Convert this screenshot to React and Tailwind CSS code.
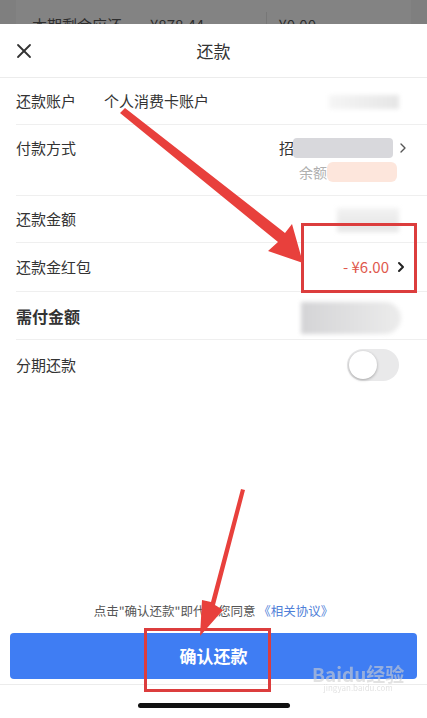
import { X, ChevronRight } from 'lucide-react'

const font = { fontFamily: '"Noto Sans CJK SC", "Noto Sans", sans-serif' }

function Row({ label, bold, children, className = '' }) {
  return (
    <div className={`ml-4 border-b border-[#efefef] flex justify-between pr-[18px] ${className}`}>
      <span className={`text-[15px] text-[#333] ${bold ? 'font-bold text-[16px]' : ''}`}>{label}</span>
      {children}
    </div>
  )
}

function Blur({ className }) {
  return <div className={`absolute blur-[2px] ${className}`} />
}

function App() {
  return (
    <div className="relative w-[427px] h-[718px] overflow-hidden bg-[#7f7f7f] flex flex-col" style={font}>
      {/* Dimmed sheet behind */}
      <div className="h-6 shrink-0 mx-4 bg-[#838383] flex items-end overflow-hidden">
        <div className="flex items-center w-full h-3 text-[15px] text-[#2e2e2e] leading-none translate-y-[6px]">
          <span className="ml-4">本期剩余应还</span>
          <span className="ml-7">¥878.44</span>
          <span className="ml-auto mr-3 w-px h-6 bg-[#777]" />
          <span className="mr-[95px]">¥0.00</span>
        </div>
      </div>

      {/* Sheet */}
      <div className="flex-1 bg-white flex flex-col">
        {/* Header */}
        <div className="h-[54px] shrink-0 border-b border-[#ececec] flex items-center relative">
          <X className="absolute left-[12px] w-[24px] h-[24px] text-[#333]" strokeWidth={1.8} />
          <span className="mx-auto text-[17px] text-[#333]">还款</span>
        </div>

        {/* Rows */}
        <Row label="还款账户" className="h-[47px] items-center relative">
          <span className="absolute left-[88px] text-[15px] text-[#333]">个人消费卡账户</span>
          <Blur className="right-[28px] top-[17px] w-[70px] h-[14px] bg-gradient-to-r from-[#f5f5f5] to-[#e6e6e6]" />
        </Row>

        <Row label="付款方式" className="h-[71px] pt-[12px] relative">
          <div className="absolute right-[16px] top-[12px] flex flex-col items-end">
            <div className="flex items-center">
              <span className="text-[15px] text-[#333]">招商</span>
              <div className="w-[100px] h-5 -ml-4 bg-[#d8d8dc] rounded-sm" />
              <ChevronRight className="w-4 h-4 text-[#555] ml-0.5" />
            </div>
            <div className="flex items-center mr-[14px] mt-[2px]">
              <span className="text-[14px] text-[#b0b0b0]">余额</span>
              <div className="w-[70px] h-5 bg-[#fde6dc] rounded-md" />
            </div>
          </div>
        </Row>

        <Row label="还款金额" className="h-[47px] items-center relative">
          <Blur className="right-[28px] top-[12px] w-[62px] h-[24px] bg-gradient-to-b from-[#f2f2f2] to-[#e5e5e5]" />
        </Row>

        <Row label="还款金红包" className="h-[49px] items-center">
          <div className="flex items-center">
            <span className="text-[15px] text-[#e0584d]">- ¥6.00</span>
            <ChevronRight className="w-4 h-4 text-[#222] ml-1" strokeWidth={3} />
          </div>
        </Row>

        <Row label="需付金额" bold className="h-[48px] items-center relative">
          <Blur className="right-[26px] top-[10px] w-[100px] h-[32px] rounded-r-full bg-gradient-to-r from-[#d4d4d6] to-[#ececec]" />
        </Row>

        <div className="ml-4 h-[50px] flex items-center justify-between pr-[28px]">
          <span className="text-[15px] text-[#333]">分期还款</span>
          <div className="w-[52px] h-[32px] rounded-full bg-[#e9e9ea] p-[2px] flex">
            <div className="w-[28px] h-[28px] rounded-full bg-white shadow-[0_1px_3px_rgba(0,0,0,0.3)]" />
          </div>
        </div>

        <div className="flex-1" />

        {/* Agreement */}
        <p className="text-center text-[12.5px] text-[#555] mb-[12px]">
          点击"确认还款"即代表您同意 <span className="text-[#4f7fd8]">《相关协议》</span>
        </p>

        <div className="px-[10px] pb-[5px] border-b border-[#ececec]">
          <button className="w-full h-[46px] rounded-[4px] bg-[#3f7df3] text-white text-[17px] font-bold">
            确认还款
          </button>
        </div>

        <div className="h-[33px] flex items-center justify-center">
          <div className="w-[152px] h-[5px] rounded-full bg-[#111] mt-[8px]" />
        </div>
      </div>

      {/* Watermark */}
      <div className="absolute left-[312px] top-[664px] flex flex-col items-center text-[#d0d0d0] opacity-60 pointer-events-none">
        <span className="text-[19px] font-bold leading-none">Baidu经验</span>
        <span className="text-[8px] leading-tight">jingyan.baidu.com</span>
      </div>

      {/* Annotations */}
      <div className="absolute left-[301px] top-[223px] w-[116px] h-[70px] border-[3px] border-[#dc3d3d]" />
      <div className="absolute left-[144px] top-[628px] w-[127px] h-[64px] border-[3px] border-[#dc3d3d]" />
      <svg className="absolute inset-0 pointer-events-none" width="427" height="718">
        <polygon points="120,113 125,108 285,233 292,224 303,263 268,251 278,242" fill="#e8403c" />
        <polygon points="245,490 241,489 211,602 202,600 200,636 223,610 215,605" fill="#e8403c" />
      </svg>
    </div>
  )
}

export default App
